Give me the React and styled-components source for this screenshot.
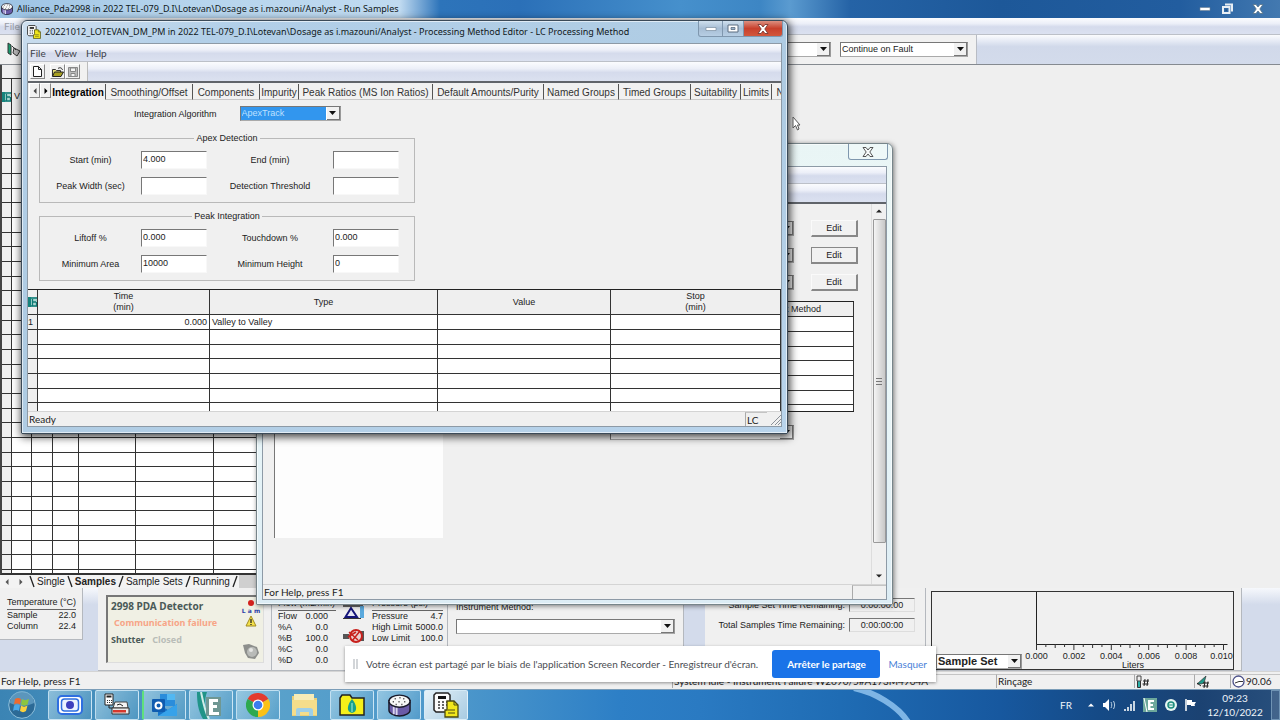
import React from "react";
import styled, { createGlobalStyle, css } from "styled-components";

const ui = `Lato, "Open Sans", sans-serif`;
const titleFont = `"Noto Sans", "Open Sans", sans-serif`;
const ms = `"Liberation Sans", Arial, sans-serif`;

const Global = createGlobalStyle`
  *, *::before, *::after { box-sizing: border-box; }
  body { margin: 0; font-family: ${ms}; font-size: 9px; line-height: 12px; color: #222; }
  button, input, select { font: inherit; color: inherit; margin: 0; padding: 0; border-radius: 0; }
  fieldset { margin: 0; min-width: 0; }
`;

const barFill = css`background: linear-gradient(#fbfcfe 0%, #eceff8 35%, #d5dbec 55%, #dbe1f0 100%);`;

const Screen = styled.div`
  position: relative;
  display: flex;
  flex-direction: column;
  height: 100vh;
  overflow: hidden;
  background: #efefef;
`;

/* ---------- main window ---------- */

const MainTitle = styled.header`
  display: flex;
  align-items: center;
  height: 18px;
  flex: none;
  padding: 0 4px 0 1px;
  gap: 4px;
  font-family: ${titleFont};
  font-size: 9px;
  color: #101820;
  background: linear-gradient(90deg, #9cc3e4 0, #b4d3ec 160px, #c0daf0 400px, #2d74ba 440px, #2b70b8 520px,
    #4690cc 680px, #3d86c4 760px, #5b9bd0 790px, #2563a6 850px, #1d5899 1000px, #225d9f 1180px, #4379b0 100%);
  svg { flex: none; }
`;

const Spacer = styled.span`flex: 1;`;

const GlassButton = styled.button`
  display: grid;
  place-items: center;
  width: ${(p) => p.$w}px;
  height: 16px;
  border: 0;
  background: transparent;
`;

const MenuStrip = styled.nav`
  display: flex;
  align-items: center;
  height: ${(p) => p.$h || 17}px;
  flex: none;
  gap: 9px;
  padding-left: ${(p) => p.$pad || 4}px;
  border-bottom: 1px solid #bcc0c8;
  ${barFill}
`;

const MenuItem = styled.button`
  border: 0;
  background: none;
  font-family: ${ui};
  font-size: 10px;
  line-height: 14px;
  color: ${(p) => (p.$dim ? "#9a9ea8" : "#3c4048")};
`;

const MainToolbar = styled.div`
  display: flex;
  height: 30px;
  flex: none;
  border-bottom: 1px solid #858a90;
  background: linear-gradient(#fbfcfe 0%, #e4e9f4 22%, #d1d9ea 40%, #d3dbeb 100%);
`;

const ToolGroup = styled.div`
  display: flex;
  align-items: center;
  gap: 9px;
  width: 977px;
  padding: 0 8px 0 6px;
  background: #f1f1f1;
  border-right: 1px solid #b8bcc4;
`;

const ComboWrap = styled.span`
  position: relative;
  display: block;
  flex: none;
  width: ${(p) => p.$w}px;
  height: 15px;
  border: 1px solid #777;
  border-right-color: #999;
  border-bottom-color: #aaa;
  background: #fff;
  select {
    display: block;
    width: 100%;
    height: 13px;
    padding: 0 15px 0 1px;
    border: 0;
    appearance: none;
    background: transparent;
    line-height: 13px;
    ${(p) => p.$bold && css`font-weight: bold; font-size: 11px;`}
  }
  ${(p) => p.$active && css`select { background: linear-gradient(90deg, #3296ee calc(100% - 14px), #fff 0); color: #bfe0ff; }`}
`;

const ComboArrow = styled.span`
  position: absolute;
  top: 0;
  right: 0;
  width: 13px;
  height: 13px;
  display: grid;
  place-items: center;
  pointer-events: none;
  background: #f1f1f1;
  border-right: 1px solid #777;
  border-bottom: 1px solid #777;
`;

const Combo = ({ w, value, label, active, bold }) => (
  <ComboWrap $w={w} $active={active} $bold={bold}>
    <select aria-label={label} defaultValue={value}>
      <option>{value}</option>
    </select>
    <ComboArrow>
      <svg width="7" height="4" aria-hidden="true"><path d="M0 0h7L3.500 4z" fill="#111" /></svg>
    </ComboArrow>
  </ComboWrap>
);

const Workspace = styled.main`
  display: flex;
  flex: 1;
  min-height: 0;
`;

const SheetColumn = styled.section`
  display: flex;
  flex-direction: column;
  width: 300px;
  min-height: 0;
`;

const SheetClip = styled.div`
  flex: 1;
  min-height: 0;
  overflow: hidden;
  border-left: 2px solid #444;
  border-bottom: 2px solid #333;
  background: #fff;
`;

const Grid = styled.table`
  width: 100%;
  table-layout: fixed;
  border-collapse: separate;
  border-spacing: 0;
  background: #fff;
  th, td {
    height: 15px;
    padding: 0 2px;
    border-right: 1px solid #333;
    border-bottom: 1px solid #333;
    font-weight: normal;
    text-align: left;
    line-height: 11px;
    white-space: nowrap;
    overflow: hidden;
  }
  tbody tr:nth-child(3n) > * { height: 14px; }
  thead th { background: #efefef; text-align: ${(p) => (p.$leftHead ? "left" : "center")}; }
  tbody th { background: #efefef; padding: 0 0 0 2px; }
  td.num { text-align: right; }
  th svg { display: block; }
  th:first-child { padding-left: 0; padding-right: 0; }
`;

const SheetTop = styled.div`
  height: 14px;
  background: #efefef;
  border-bottom: 1px solid #333;
`;

const SheetTabs = styled.div`
  display: flex;
  align-items: center;
  height: 13px;
  flex: none;
  background: #cfcfcf;
  svg { display: block; flex: none; background: #f3f3f3; }
`;

const SheetTab = styled.button`
  height: 13px;
  border: 0;
  padding: 0 ${(p) => (p.$nav ? 4 : 1)}px;
  background: #f3f3f3;
  font-size: 10px;
  font-weight: ${(p) => (p.$on ? "bold" : "normal")};
`;

/* ---------- instrument panels ---------- */

const PanelStrip = styled.section`
  display: flex;
  align-items: stretch;
  height: 83px;
  flex: none;
  background: linear-gradient(#f6f8fc, #d3dbeb 20%, #d3dbeb);
`;

const Panel = styled.div`
  display: flex;
  flex: none;
  align-self: ${(p) => (p.$short ? "flex-start" : "stretch")};
  width: ${(p) => p.$w}px;
  gap: ${(p) => p.$gap || 0}px;
  margin-right: ${(p) => p.$after || 0}px;
  padding: ${(p) => p.$p || "0"};
  background: #f0f0f0;
  border-right: 1px solid #b4b8be;
  border-bottom: 1px solid #b4b8be;
`;

const Readings = styled.table`
  align-self: flex-start;
  width: ${(p) => p.$w}px;
  border-spacing: 0;
  line-height: 11px;
  white-space: nowrap;
  caption { text-align: left; border-bottom: 1px solid #666; height: 13px; }
  th { padding: 0; font-weight: normal; text-align: left; }
  td { padding: 0 ${(p) => p.$inset || 0}px 0 0; text-align: right; }
`;

const Data = ({ w, title, rows, inset }) => (
  <Readings $w={w} $inset={inset}>
    <caption>{title}</caption>
    <tbody>
      {rows.map(([k, v]) => (
        <tr key={k}><th scope="row">{k}</th><td>{v}</td></tr>
      ))}
    </tbody>
  </Readings>
);

const Detector = styled.div`
  flex: 1;
  display: flex;
  justify-content: space-between;
  padding: 3px 2px 2px 3px;
  background: #f0f0e4;
  border: 1px solid #ddd;
  border-top: 2px solid #777;
  border-left: 2px solid #777;
  font-family: "Noto Sans", sans-serif;
  font-weight: bold;
`;

const DetectorText = styled.div`
  display: flex;
  flex-direction: column;
  gap: 5px;
  white-space: nowrap;
`;

const DetectorLine = styled.span`
  font-size: ${(p) => p.$s || 9}px;
  padding-left: ${(p) => p.$in || 0}px;
  color: ${(p) => p.$c || "#4a5a58"};
  em { font-style: normal; color: #b9bdb8; padding-left: 5px; }
`;

const DetectorIcons = styled.div`
  display: flex;
  flex-direction: column;
  align-items: center;
  width: 20px;
  color: #2c3fa8;
  font-size: 6px;
  line-height: 9px;
  font-family: "DejaVu Sans", sans-serif;
  svg:last-child { margin-top: auto; }
`;

const IconColumn = styled.div`
  display: flex;
  flex-direction: column;
  gap: 8px;
  width: 22px;
`;

const FieldColumn = styled.div`
  display: flex;
  flex-direction: column;
  gap: 6px;
  flex: 1;
`;

const TimeRow = styled.div`
  display: flex;
  align-items: center;
  justify-content: flex-end;
  gap: 4px;
  white-space: nowrap;
`;

const TimeBox = styled.output`
  width: 66px;
  height: 14px;
  text-align: center;
  border: 1px solid #ddd;
  border-top-color: #777;
  border-left-color: #777;
`;

const PlotBox = styled.div`
  display: flex;
  flex: 1;
  min-width: 0;
  align-items: flex-end;
  border: 1px solid #333;
  padding-left: 4px;
  > svg { display: block; flex: none; overflow: visible; }
  svg text { font-family: ${ms}; font-size: 9px; fill: #222; }
`;

const StatusBar = styled.footer`
  display: flex;
  align-items: center;
  height: ${(p) => p.$h || 18}px;
  flex: none;
  font-family: ${ui};
  font-size: 10px;
  background: #f0f0f0;
  border-top: 1px solid #d4d4d4;
  white-space: nowrap;
`;

const Pane = styled.span`
  display: flex;
  align-items: center;
  gap: 1px;
  height: 14px;
  padding-left: 1px;
  overflow: hidden;
  flex: ${(p) => (p.$w ? `0 0 ${p.$w}px` : "1")};
  border-left: ${(p) => (p.$line ? "1px solid #aaa" : "0")};
  border-top: ${(p) => (p.$line ? "1px solid #c4c4c4" : "0")};
`;

/* ---------- floating windows ---------- */

const Window = styled.section`
  position: absolute;
  left: ${(p) => p.$x}px;
  top: ${(p) => p.$y}px;
  width: ${(p) => p.$w}px;
  display: flex;
  flex-direction: column;
  padding: 0 5px ${(p) => (p.$front ? 6 : 4)}px;
  border: 1px solid ${(p) => (p.$front ? "#3b4a58" : "#77858a")};
  border-radius: 6px 6px 1px 1px;
  background: ${(p) => (p.$front
    ? "linear-gradient(160deg, #cfe0f0 0, #b2cfe8 12%, #aecbe2 50%, #b9d4ec 100%)"
    : "linear-gradient(#e9f5f5, #eefafa 40%, #dcecf4)")};
  box-shadow: inset 0 0 0 1px rgba(255, 255, 255, 0.6), ${(p) => (p.$front
    ? "1px 2px 8px 1px rgba(0, 0, 0, 0.75)" : "1px 1px 5px rgba(0, 0, 0, 0.5)")};
`;

const WindowTitle = styled.header`
  display: flex;
  align-items: center;
  gap: 4px;
  height: 22px;
  font-family: ${titleFont};
  font-size: 9px;
  color: #101820;
  white-space: nowrap;
  margin-right: -1px;
  svg { flex: none; }
`;

const Caption = styled.button`
  display: grid;
  place-items: center;
  align-self: flex-start;
  width: ${(p) => p.$w}px;
  height: 16px;
  border: 1px solid #7f97ae;
  border-top: 0;
  margin-left: ${(p) => (p.$join ? -5 : 0)}px;
  border-radius: ${(p) => p.$r || "0"};
  background: ${(p) => p.$bg || "linear-gradient(#cfdfee, #a6bdd4 50%, #b7cee4)"};
`;

const Client = styled.div`
  display: flex;
  flex-direction: column;
  background: #f0f0f0;
  border: 1px solid #8d9aa6;
`;

const ToolStrip = styled.div`
  display: flex;
  align-items: center;
  height: ${(p) => p.$h || 21}px;
  flex: none;
  border-bottom: 2px solid #60646a;
  ${barFill}
`;

const ToolButtons = styled.div`
  display: flex;
  align-items: center;
  height: 19px;
  padding-left: 2px;
  width: 60px;
  background: #f1f1f1;
  border-right: 1px solid #bbb;
`;

const ToolButton = styled.button`
  display: grid;
  place-items: center;
  width: 15px;
  height: 15px;
  margin-right: ${(p) => p.$after || 0}px;
  background: #f1f1f1;
  border: 1px solid #fff;
  border-right-color: #888;
  border-bottom-color: #888;
`;

const TabRow = styled.div`
  display: flex;
  height: 17px;
  overflow: hidden;
  padding-left: 1px;
`;

const NavButton = styled.button`
  display: grid;
  place-items: center;
  width: 11px;
  height: 15px;
  flex: none;
  background: #f1f1f1;
  border: 1px solid #fff;
  border-right-color: #888;
  border-bottom-color: #888;
`;

const Tab = styled.button`
  flex: none;
  width: ${(p) => p.$w}px;
  height: 16px;
  margin-top: 1px;
  padding-top: 2px;
  border: 0;
  border-right: 1px solid #555;
  border-bottom: 1px solid ${(p) => (p.$on ? "transparent" : "#c8c8c8")};
  background: #f1f1f1;
  font-size: 10px;
  font-weight: ${(p) => (p.$on ? "bold" : "normal")};
  color: ${(p) => (p.$on ? "#000" : "#333")};
  white-space: nowrap;
  overflow: hidden;
`;

const Form = styled.form`
  display: flex;
  flex-direction: column;
  align-items: flex-start;
  gap: 7px;
  padding: 6px 11px 8px;
`;

const AlgorithmRow = styled.div`
  display: flex;
  align-items: center;
  gap: 23px;
  padding: 0 0 4px 95px;
`;

const Group = styled.fieldset`
  width: 376px;
  border: 1px solid #b9b9b9;
  padding: 7px 0;
  legend { padding: 0 2px; margin: 0 auto; height: 12px; font-size: 9px; }
`;

const GroupGrid = styled.div`
  display: grid;
  grid-template-columns: 101px 66px 126px 66px;
  row-gap: 8px;
  align-items: center;
  label { text-align: center; }
`;

const Field = styled.input`
  width: 66px;
  height: 18px;
  padding: 0 0 3px 1px;
  background: #fff;
  border: 1px solid #f8f8f8;
  border-top-color: #777;
  border-left-color: #777;
`;

const GridClip = styled.div`
  height: ${(p) => p.$h}px;
  overflow: hidden;
  border-top: 1px solid #222;
  ${(p) => p.$boxed && css`border-left: 1px solid #222; border-bottom: 1px solid #222;`}
`;

const MethodBody = styled.div`
  display: flex;
  height: 380px;
`;

const MethodPane = styled.div`
  flex: 1;
  display: flex;
  justify-content: space-between;
  padding: 16px 13px 46px 11px;
`;

const MethodList = styled.div`
  width: 169px;
  background: #fdfdfd;
  border-left: 1px solid #777;
`;

const MethodFields = styled.div`
  display: flex;
  flex-direction: column;
  width: 248px;
`;

const MethodRow = styled.div`
  display: flex;
  justify-content: space-between;
  height: 17px;
  margin-bottom: 10px;
  align-items: center;
`;

const MethodGrid = styled.div`
  width: 244px;
  margin-bottom: 13px;
`;

const HeadShift = styled.div`
  padding-right: 32px;
  text-align: right;
`;

const PushButton = styled.button`
  width: 47px;
  height: 17px;
  background: #f1f1f1;
  border: 1px solid ${(p) => (p.$focus ? "#888" : "#fafafa")};
  border-right: 2px solid #888;
  border-bottom: 2px solid #888;
`;

const Scroll = styled.div`
  display: flex;
  flex-direction: column;
  align-items: center;
  width: 15px;
  padding: 4px 0 5px;
  gap: 5px;
  border-left: 1px solid #ddd;
`;

const Thumb = styled.div`
  display: grid;
  place-items: center;
  width: 13px;
  height: 324px;
  margin-bottom: auto;
  border: 1px solid #9a9a9a;
  border-radius: 1px;
  background: linear-gradient(90deg, #f4f4f4, #dedede 50%, #c8c8c8);
`;

/* ---------- screen sharing bar ---------- */

const ShareBar = styled.aside`
  position: absolute;
  left: 345px;
  bottom: 38px;
  display: flex;
  align-items: center;
  width: 591px;
  height: 36px;
  padding: 0 9px 0 8px;
  background: #fff;
  box-shadow: 0 1px 3px rgba(0, 0, 0, 0.4);
  font-family: ${ui};
  font-size: 10px;
  color: #4a4d52;
  white-space: nowrap;
  svg { margin-right: 8px; }
`;

const StopButton = styled.button`
  width: 108px;
  height: 28px;
  margin: 0 8px 0 auto;
  border: 0;
  border-radius: 3px;
  background: #1a73e8;
  color: #fff;
  font-weight: bold;
`;

const HideLink = styled.a`
  color: #4a7fd8;
  text-decoration: none;
`;

/* ---------- taskbar ---------- */

const Taskbar = styled.footer`
  position: relative;
  display: flex;
  align-items: center;
  height: 31px;
  flex: none;
  padding-left: 4px;
  background: linear-gradient(90deg, #3b84b4 0, #5aa2cb 260px, #4c97cb 460px, #2d7fc6 620px, #2a7ac2 700px,
    #1f6cb4 840px, #17589f 1000px, #154a86 1100px, #1b4272 1200px, #284f7c 100%);
  border-top: 1px solid #7b9db8;
`;

const Streak = styled.svg`
  position: absolute;
  left: 840px;
  top: 0;
`;

const Orb = styled.button`
  width: 36px;
  height: 30px;
  margin-right: 8px;
  border: 0;
  background: none;
  svg { display: block; margin: auto; }
`;

const Task = styled.button`
  display: grid;
  place-items: center;
  width: 44px;
  height: 30px;
  margin-right: 3px;
  border: 1px solid ${(p) => (p.$plain ? "transparent" : "rgba(225, 243, 252, 0.75)")};
  border-radius: 2px;
  background: ${(p) => (p.$on
    ? "linear-gradient(135deg, #e4f1f8, #a8cbe2)"
    : p.$plain ? "transparent" : "linear-gradient(120deg, rgba(190, 225, 240, 0.6), rgba(90, 160, 200, 0.25))")};
  ${(p) => p.$green && css`border-left: 2px solid #5fe07c;`}
`;

const Tray = styled.div`
  display: flex;
  align-items: center;
  gap: 8px;
  margin-left: auto;
  color: #eef4fa;
  font-family: ${ui};
  font-size: 10px;
  line-height: 14px;
  svg { display: block; }
`;

const Language = styled.span`
  margin-right: 8px;
`;

const Clock = styled.time`
  width: 60px;
  margin-right: -2px;
  text-align: center;
`;

const ShowDesktop = styled.button`
  width: 9px;
  height: 30px;
  border: 1px solid #6f93b4;
  background: rgba(255, 255, 255, 0.12);
`;

const Pointer = styled.svg`
  position: absolute;
  left: 791px;
  top: 116px;
`;

/* ---------- icons ---------- */

const EmpowerIcon = () => (
  <svg width="9" height="10" aria-hidden="true">
    <path d="M0 0h9v10H0z" fill="#a9d6d0" />
    <path d="M0 0h3v10H0z" fill="#15837c" />
    <path d="M3 1h6M4 5h4M3 9h6M4.500 2v7M8.500 5v4" stroke="#0e7a74" strokeWidth="1.300" fill="none" />
  </svg>
);

const CalcIcon = ({ size = 14 }) => (
  <svg width={size} height={size} viewBox="0 0 26 26" aria-hidden="true">
    <path d="M3 1h12l2 2v15l-2 2H3l-2-2V3z" fill="#fafafa" stroke="#222" strokeWidth="1.500" />
    <path d="M5 4h8v3H5z" fill="#111" />
    <path d="M5 10h2m2 0h2m2 0h2M5 13h2m2 0h2m2 0h2M5 16h2m2 0h2" stroke="#333" strokeWidth="1.500" />
    <path d="M14 9h7l4 4v12H12V18h2z" fill="#f1e71c" stroke="#4c4a10" strokeWidth="1.300" />
    <path d="M21 9v4h4M15 18h7M15 21h7" stroke="#4c4a10" fill="none" />
  </svg>
);

const DrumIcon = ({ size = 12 }) => (
  <svg width={size} height={size} viewBox="0 0 24 24" aria-hidden="true">
    <path d="M1 7v10c0 3 5 6 11 6s11-3 11-6V7z" fill="#6a5ba8" stroke="#1a1a2a" strokeWidth="1.500" />
    <path d="M6 12v9M9 13v9" stroke="#d8d4ee" strokeWidth="2" />
    <ellipse cx="12" cy="7.500" rx="11" ry="6.300" fill="#f7f7f7" stroke="#1a1a2a" strokeWidth="1.500" />
    <path d="M7 5h1m4-1h1m3 1h1M5 8h1m5 0h1m5 0h1M8 11h1m5 0h1" stroke="#222" strokeWidth="1.600" />
  </svg>
);

const Cross = ({ fill, edge }) => (
  <svg width="12" height="10" viewBox="0 0 12 10" aria-hidden="true">
    <path d="M1 .5h3L6 3 8 .5h3L7.800 5 11 9.500H8L6 7 4 9.500H1L4.200 5z" fill={fill} stroke={edge} strokeWidth="0.900" />
  </svg>
);

const MinIcon = () => (
  <svg width="12" height="4" aria-hidden="true"><path d="M1 .5h10v3H1z" fill="#fff" stroke="#6b7f94" strokeWidth=".6" /></svg>
);

const MaxIcon = () => (
  <svg width="12" height="9" aria-hidden="true">
    <path d="M1 1h10v7H1z" fill="#fff" stroke="#5b6c80" />
    <path d="M4 3.500h4v2H4z" fill="#9db4cb" stroke="#5b6c80" strokeWidth=".8" />
  </svg>
);

const RestoreIcon = () => (
  <svg width="12" height="12" aria-hidden="true">
    <path d="M4 1.500h7v7M2 4h6.500v6H2z" fill="none" stroke="#e8eef4" strokeWidth="2" />
    <path d="M4.500 6.500h1.500v1.500H4.500z" fill="#24507f" />
  </svg>
);

const Tri = ({ dir, fill = "#222" }) => (
  <svg width="6" height="6" viewBox="0 0 6 6" aria-hidden="true">
    <path d={{ l: "M4.500 0v6L1.500 3z", r: "M1.500 0v6L4.500 3z", u: "M0 4.500h6L3 1.500z", d: "M0 1.500h6L3 4.500z" }[dir]} fill={fill} />
  </svg>
);

const Slash = ({ back }) => (
  <svg width="8" height="13" aria-hidden="true">
    <path d={back ? "M2 1l4 11" : "M6 1L2 12"} stroke="#222" strokeWidth="1.300" />
  </svg>
);

const ValveIcon = () => (
  <svg width="22" height="22" aria-hidden="true">
    <path d="M0 4l6-3h10l4 4v4H0z" fill="#666" />
    <path d="M17 8h4v12h-4z" fill="#5aa9dd" />
    <path d="M2.500 19L8 10l6 9z" fill="#e6e6f4" stroke="#15157a" strokeWidth="2" />
    <path d="M0 20.500h18" stroke="#333" />
  </svg>
);

const StopFlowIcon = () => (
  <svg width="22" height="16" aria-hidden="true">
    <path d="M0 6h6v5H0zM17 3h4v10h-4z" fill="#555" />
    <circle cx="13" cy="8" r="6" fill="#e9d0d0" stroke="#c8201c" strokeWidth="2" />
    <path d="M6 4l9 8M5 9l8-5M17 3L9 13" stroke="#c8201c" strokeWidth="1.500" />
  </svg>
);

const leftCols = [10, 20, 21, 26, 57, 78, 88];

const range = (n) => Array.from({ length: n }, (_, i) => i);

const TABS = [
  ["Integration", 55], ["Smoothing/Offset", 87], ["Components", 67], ["Impurity", 39],
  ["Peak Ratios (MS Ion Ratios)", 134], ["Default Amounts/Purity", 111], ["Named Groups", 75],
  ["Timed Groups", 72], ["Suitability", 50], ["Limits", 31], ["Noise and Drift", 76],
];

const GROUPS = [
  ["Apex Detection", [["Start (min)", "4.000"], ["End (min)", ""], ["Peak Width (sec)", ""], ["Detection Threshold", ""]]],
  ["Peak Integration", [["Liftoff %", "0.000"], ["Touchdown %", "0.000"], ["Minimum Area", "10000"], ["Minimum Height", "0"]]],
];

function RunSheet() {
  return (
    <SheetColumn>
      <SheetClip>
        <SheetTop />
        <Grid $leftHead>
          <colgroup>{leftCols.map((w, i) => <col key={i} style={{ width: w }} />)}</colgroup>
          <thead>
            <tr style={{ height: 36 }}>
              <th><EmpowerIcon /></th><th>V</th><th /><th /><th /><th /><th />
            </tr>
          </thead>
          <tbody>
            {range(34).map((r) => (
              <tr key={r}><th />{range(6).map((c) => <td key={c} />)}</tr>
            ))}
          </tbody>
        </Grid>
      </SheetClip>
      <SheetTabs>
        <SheetTab $nav aria-label="Previous sheet"><Tri dir="l" fill="#555" /></SheetTab>
        <SheetTab $nav aria-label="Next sheet"><Tri dir="r" fill="#555" /></SheetTab>
        <Slash back />
        <SheetTab>Single</SheetTab><Slash back />
        <SheetTab $on>Samples</SheetTab><Slash />
        <SheetTab>Sample Sets</SheetTab><Slash />
        <SheetTab>Running</SheetTab><Slash />
      </SheetTabs>
    </SheetColumn>
  );
}

function Plot() {
  const step = 37.4;
  return (
    <PlotBox>
      <Combo w={86} value="Sample Set" label="Plot scope" bold />
      <svg width="212" height="80" aria-label="Flow plot">
        <path d="M14.500 3v58M14.500 55.500h191" stroke="#222" fill="none" />
        {range(21).map((i) => (
          <path key={i} d={`M${14.500 + (i * step) / 4} 55v${i % 4 === 0 ? 6 : i % 2 === 0 ? 4 : 3}`} stroke="#333" />
        ))}
        {range(6).map((i) => (
          <text key={i} x={14.500 + i * step - (i === 5 ? 2 : 0)} y="70" textAnchor="middle">{`0.0${i === 5 ? "10" : `0${i * 2}`}`}</text>
        ))}
        <text x="111" y="79" textAnchor="middle">Liters</text>
      </svg>
    </PlotBox>
  );
}

function Instruments() {
  return (
    <PanelStrip>
      <Panel $short $w={83} $p="9px 6px 7px 7px" $after={15}>
        <Data w={69} title="Temperature (°C)" rows={[["Sample", "22.0"], ["Column", "22.4"]]} />
      </Panel>
      <Panel $w={174} $p="7px 7px 7px 8px">
        <Detector>
          <DetectorText>
            <DetectorLine $s={10}>2998 PDA Detector</DetectorLine>
            <DetectorLine $in={3} $c="#f7a587">Communication failure</DetectorLine>
            <DetectorLine>Shutter <em>Closed</em></DetectorLine>
          </DetectorText>
          <DetectorIcons>
            <svg width="8" height="6" aria-hidden="true"><circle cx="4" cy="3" r="3" fill="#d3201c" /></svg>
            L a m
            <svg width="12" height="12" aria-hidden="true">
              <path d="M6 1l5 10H1z" fill="#f3e04a" stroke="#a08a20" /><path d="M6 4v4M6 9v1" stroke="#222" strokeWidth="1.300" />
            </svg>
            <svg width="18" height="17" aria-hidden="true">
              <path d="M1 2l6-1 8 3 2 6-4 6-7-1-3-5z" fill="#8d8f8c" /><circle cx="10" cy="9" r="5" fill="#b9bbb8" /><circle cx="9" cy="7" r="2" fill="#e6e6e4" />
            </svg>
          </DetectorIcons>
        </Detector>
      </Panel>
      <Panel $w={176} $p="10px 4px 0 6px" $gap={7}>
        <Data w={58} inset={8} title="Flow (mL/min)" rows={[["Flow", "0.000"], ["%A", "0.0"], ["%B", "100.0"], ["%C", "0.0"], ["%D", "0.0"]]} />
        <IconColumn><ValveIcon /><StopFlowIcon /></IconColumn>
        <Data w={71} title="Pressure (psi)" rows={[["Pressure", "4.7"], ["High Limit", "5000.0"], ["Low Limit", "100.0"]]} />
      </Panel>
      <Panel $w={236} $p="13px 8px 0 8px" $after={21}>
        <FieldColumn>
          <span>Instrument Method:</span>
          <Combo w={219} value="" label="Instrument Method" />
        </FieldColumn>
      </Panel>
      <Panel $w={221} $p="10px 10px 0 0">
        <FieldColumn>
          {["Sample Set Time Remaining:", "Total Samples Time Remaining:"].map((t) => (
            <TimeRow key={t}>{t}<TimeBox>0:00:00:00</TimeBox></TimeRow>
          ))}
        </FieldColumn>
      </Panel>
      <Panel $w={316} $p="3px 7px 0 5px"><Plot /></Panel>
    </PanelStrip>
  );
}

function MethodWindow() {
  return (
    <Window $x={256} $y={143} $w={637} aria-label="Method">
      <WindowTitle>
        <Spacer />
        <Caption $w={40} aria-label="Close" $r="0 0 3px 3px" $bg="#eef8f8"><Cross fill="#f6fafa" edge="#444" /></Caption>
      </WindowTitle>
      <Client>
        <MenuStrip />
        <ToolStrip $h={20} />
        <MethodBody>
          <MethodPane>
            <MethodList />
            <MethodFields>
              {range(3).map((i) => (
                <MethodRow key={i}>
                  <Combo w={184} value="" label={`Method ${i + 1}`} />
                  <PushButton $focus={i === 1}>Edit</PushButton>
                </MethodRow>
              ))}
              <MethodGrid>
                <GridClip $h={111} $boxed>
                  <Grid>
                    <thead><tr><th scope="col"><HeadShift>Export Method</HeadShift></th></tr></thead>
                    <tbody>{range(7).map((r) => <tr key={r}><td /></tr>)}</tbody>
                  </Grid>
                </GridClip>
              </MethodGrid>
              <Combo w={184} value="" label="Output" />
            </MethodFields>
          </MethodPane>
          <Scroll>
            <Tri dir="u" />
            <Thumb>
              <svg width="6" height="8" aria-hidden="true"><path d="M0 1.500h6M0 4.500h6M0 7.500h6" stroke="#777" /></svg>
            </Thumb>
            <Tri dir="d" />
          </Scroll>
        </MethodBody>
        <StatusBar $h={15}><Pane>For Help, press F1</Pane><Pane $w={34} $line /></StatusBar>
      </Client>
    </Window>
  );
}

function EditorWindow() {
  return (
    <Window $x={21} $y={20} $w={767} $front aria-label="Processing Method Editor">
      <WindowTitle>
        <CalcIcon />
        20221012_LOTEVAN_DM_PM in 2022 TEL-079_D.I\Lotevan\Dosage as i.mazouni/Analyst - Processing Method Editor - LC Processing Method
        <Spacer />
        <Caption $w={25} $r="0 0 0 3px" aria-label="Minimize"><MinIcon /></Caption>
        <Caption $w={22} $join aria-label="Maximize"><MaxIcon /></Caption>
        <Caption $w={40} $join $r="0 0 3px 0" aria-label="Close" $bg="linear-gradient(#dd8f80, #c8402c 50%, #d2573c)">
          <Cross fill="#fff" edge="#7a3a34" />
        </Caption>
      </WindowTitle>
      <Client>
        <MenuStrip $h={18} $pad={2}>
          {["File", "View", "Help"].map((m) => <MenuItem key={m}>{m}</MenuItem>)}
        </MenuStrip>
        <ToolStrip>
          <ToolButtons>
            <ToolButton $after={5} aria-label="New">
              <svg width="9" height="11" aria-hidden="true"><path d="M.5.500h5l3 3v7h-8zM5.500.500v3h3" fill="#fff" stroke="#222" /></svg>
            </ToolButton>
            <ToolButton aria-label="Open">
              <svg width="12" height="10" aria-hidden="true">
                <path d="M.5 9V2.500h3l1 1h4V5" fill="#e8e07a" stroke="#333" /><path d="M.5 9.500l2-4.500h9l-2.500 4.500z" fill="#a8a020" stroke="#222" /><path d="M6 1.500c2-1.500 4-.5 4.500 1.500" stroke="#222" fill="none" />
              </svg>
            </ToolButton>
            <ToolButton aria-label="Save">
              <svg width="10" height="10" aria-hidden="true"><path d="M.5.500h9v9h-9z" fill="#bbb" stroke="#888" /><path d="M2.500 1h5v3.500h-5zM3 6.500h4v3H3z" fill="#f4f4f4" stroke="#888" /></svg>
            </ToolButton>
          </ToolButtons>
        </ToolStrip>
        <TabRow role="tablist">
          <NavButton aria-label="Scroll left"><Tri dir="l" fill="#444" /></NavButton>
          <NavButton aria-label="Scroll right"><Tri dir="r" fill="#000" /></NavButton>
          {TABS.map(([t, w], i) => <Tab key={t} role="tab" $w={w} $on={i === 0}>{t}</Tab>)}
        </TabRow>
        <Form>
          <AlgorithmRow>
            <span>Integration Algorithm</span>
            <Combo w={101} value="ApexTrack" label="Integration Algorithm" active />
          </AlgorithmRow>
          {GROUPS.map(([title, fields]) => (
            <Group key={title}>
              <legend>{title}</legend>
              <GroupGrid>
                {fields.map(([name, value]) => (
                  <React.Fragment key={name}>
                    <label htmlFor={name}>{name}</label>
                    <Field id={name} defaultValue={value} />
                  </React.Fragment>
                ))}
              </GroupGrid>
            </Group>
          ))}
        </Form>
        <GridClip $h={122}>
          <Grid>
            <colgroup>{[10, 172, 228, 173, 170].map((w, i) => <col key={i} style={{ width: w }} />)}</colgroup>
            <thead>
              <tr style={{ height: 25 }}>
                <th><EmpowerIcon /></th><th>Time<br />(min)</th><th>Type</th><th>Value</th><th>Stop<br />(min)</th>
              </tr>
            </thead>
            <tbody>
              {range(7).map((r) => (
                <tr key={r}>
                  <th scope="row">{r === 0 ? "1" : ""}</th>
                  <td className="num">{r === 0 ? "0.000" : ""}</td>
                  <td>{r === 0 ? "Valley to Valley" : ""}</td>
                  <td /><td />
                </tr>
              ))}
            </tbody>
          </Grid>
        </GridClip>
        <StatusBar $h={15}>
          <Pane>Ready</Pane>
          <Pane $w={22} $line>LC</Pane>
          <svg width="14" height="12" aria-hidden="true"><path d="M4 12L14 2M8 12l6-6M11 12l3-3" stroke="#8a9098" /></svg>
        </StatusBar>
      </Client>
    </Window>
  );
}

const TASKS = [
  ["Screen Recorder", {}, <svg key="i" width="26" height="20"><rect x="1" y="1" width="24" height="18" rx="4" fill="#fff" stroke="#2f6fe0" strokeWidth="2" /><rect x="4.500" y="4" width="17" height="12" rx="3" fill="#eaf2ff" stroke="#2f6fe0" strokeWidth="1.500" /><circle cx="13" cy="10" r="4" fill="#3d3fbe" /></svg>],
  ["Instrument", {}, <svg key="i" width="26" height="24"><path d="M1 1h8v11H1z" fill="#fff" stroke="#222" /><path d="M2.500 2.500h5v2h-5z" fill="#222" /><path d="M3 7.500h5M3 9.500h5" stroke="#333" strokeDasharray="1 1" /><path d="M5 12v3h5" stroke="#222" fill="none" /><path d="M11 9h12l1 6H9z" fill="#f4f4f4" stroke="#444" /><path d="M8 15h17v6H8z" fill="#e8e8e8" stroke="#333" /><path d="M9 17h13v2.500H9z" fill="#d6382c" /><path d="M13 12l3-1 3 2" stroke="#222" fill="none" /></svg>],
  ["Outlook", { $green: true }, <svg key="i" width="26" height="24"><path d="M8 1h15v12H8z" fill="#2a8ddb" /><path d="M15 1h8v6h-8z" fill="#52b8f2" /><path d="M6 11l10 6 9-6v12H6z" fill="#1673c8" /><path d="M6 23l19-12v12z" fill="#36a2ea" /><rect x="0" y="6" width="13" height="13" rx="1" fill="#0f5cb0" /><circle cx="6.500" cy="12.500" r="3" fill="none" stroke="#fff" strokeWidth="2" /></svg>],
  ["Empower", {}, <svg key="i" width="28" height="27"><path d="M0 0h10c-3 8-2 18 1 27H6C1 18 0 10 0 0z" fill="#209488" /><path d="M4 0c2 10 4 20 8 27" stroke="#d0ece8" strokeWidth="2" fill="none" /><path d="M9 5h15v19H9z" fill="#6f9793" /><path d="M12 7h9v3h-5v3h4v3h-4v4h6v3H12z" fill="#fff" /></svg>],
  ["Chrome", {}, <svg key="i" width="24" height="24" viewBox="0 0 24 24"><path d="M12 12L1.600 6A12 12 0 0 1 22.400 6z" fill="#e33b2e" /><path d="M12 12L22.400 6A12 12 0 0 1 12 24z" fill="#fbc116" /><path d="M12 12v12A12 12 0 0 1 1.600 6z" fill="#2da94f" /><circle cx="12" cy="12" r="5.500" fill="#fff" /><circle cx="12" cy="12" r="4.300" fill="#3b7ded" /></svg>],
  ["Explorer", { $plain: true }, <svg key="i" width="28" height="24"><path d="M1 3h9l2 2h14v18H1z" fill="#e9cf78" /><path d="M3 1h20v6H3z" fill="#f6ecb8" /><path d="M1 7h25v15H1z" fill="#f5dd8b" /><path d="M5 23v-6c0-2 2-2 3-2h11c2 0 3 1 3 2v6h-4v-4h-9v4z" fill="#9fcfe8" /></svg>],
  ["Projects", {}, <svg key="i" width="26" height="22"><path d="M1 4l2-3h8l2 3h12v17H1z" fill="#f6f01a" stroke="#222" strokeWidth="1.500" /><path d="M13 5c5 6 6 13 0 14-6-1-5-8 0-14z" fill="#18a08c" /><path d="M13 9v9" stroke="#a6f0e4" /></svg>],
  ["Run Samples", {}, <DrumIcon key="i" size={23} />],
  ["Processing Method", { $on: true }, <CalcIcon key="i" size={26} />],
];

export default function App() {
  return (
    <>
      <Global />
      <Screen>
        <MainTitle>
          <DrumIcon />
          Alliance_Pda2998 in 2022 TEL-079_D.I\Lotevan\Dosage as i.mazouni/Analyst - Run Samples
          <Spacer />
          <GlassButton $w={18} aria-label="Minimize"><MinIcon /></GlassButton>
          <GlassButton $w={18} aria-label="Restore"><RestoreIcon /></GlassButton>
          <GlassButton $w={36} aria-label="Close"><Cross fill="#fff" edge="#5a7890" /></GlassButton>
        </MainTitle>
        <MenuStrip><MenuItem $dim>File</MenuItem></MenuStrip>
        <MainToolbar>
          <ToolGroup>
            <svg width="16" height="16" aria-hidden="true"><path d="M2 1l3 2v10l-3-2z" fill="#1b9a6e" stroke="#333" /><path d="M6 4l4 4M8 6l6 3-3 5-4-3z" fill="#bbb" stroke="#333" /></svg>
            <Spacer />
            <Combo w={100} value="" label="Run mode" />
            <Combo w={128} value="Continue on Fault" label="Fault handling" />
          </ToolGroup>
        </MainToolbar>
        <Workspace><RunSheet /></Workspace>
        <Instruments />
        <StatusBar>
          <Pane $w={672}>For Help, press F1</Pane>
          <Pane $line>System Idle - Instrument Failure W2690/5#A173M4904A</Pane>
          <Pane $w={138} $line>Rinçage</Pane>
          <Pane $w={60} $line>
            <svg width="14" height="13" aria-hidden="true"><path d="M1.500 2.500h3v10h-3z" fill="#2ab0a8" stroke="#333" /><path d="M1 1h4v5H1z" fill="#eee" stroke="#444" /><path d="M7 6h6M6.500 9h6M9 4L8 11M12 4l-1 7" stroke="#222" /></svg>
          </Pane>
          <Pane $w={36} $line>
            <svg width="14" height="13" aria-hidden="true"><path d="M1 9l9-8-2 7-3 1z" fill="#1e9a8a" stroke="#333" strokeWidth=".7" /><path d="M1 8l4 3M7 8h6M6.500 11h6M9 6.500L8 13M12 6.500L11 13" stroke="#222" /></svg>
          </Pane>
          <Pane $w={50} $line>
            <svg width="13" height="13" aria-hidden="true"><circle cx="6.500" cy="6.500" r="5.500" fill="#fff" stroke="#4a4f88" strokeWidth="1.300" /><path d="M3 8l4-1.500h4" stroke="#333" fill="none" /></svg>
            <span>90.06</span>
          </Pane>
        </StatusBar>
        <Taskbar>
          <Streak width="100" height="30" aria-hidden="true">
            <path d="M14 -2c20 4 44 18 54 34" stroke="#8fc3ee" strokeWidth="6" fill="none" opacity="0.850" />
          </Streak>
          <Orb aria-label="Start">
            <svg width="28" height="28" viewBox="0 0 28 28">
              <circle cx="14" cy="14" r="13.300" fill="#2c6a96" stroke="#8fc0dc" />
              <path d="M2 12a12 12 0 0 1 24 0c-8 4-16 4-24 0z" fill="#6fa9cc" opacity="0.700" />
              <path d="M7 8c2-1.500 4-1.500 6 0l-1 5.500c-2-1.500-4-1.500-6 0z" fill="#ee6a2e" />
              <path d="M14 8c2 1.500 4 1.500 7 0l-1.500 5.500c-2 1.500-4.500 1.500-6.500 0z" fill="#8cc63f" />
              <path d="M6 14.500c2-1.500 4-1.500 6 0l-1 5.500c-2-1.500-4-1.500-6 0z" fill="#4aa8e8" />
              <path d="M13 14.500c2 1.500 4 1.500 6.500 0L18 20c-2 1.500-4 1.500-6 0z" fill="#fbd13c" />
            </svg>
          </Orb>
          {TASKS.map(([name, props, icon]) => <Task key={name} aria-label={name} {...props}>{icon}</Task>)}
          <Tray>
            <Language>FR</Language>
            <Tri dir="u" fill="#fff" />
            <svg width="14" height="12" aria-hidden="true"><path d="M1 4h2l4-4v12L3 8H1z" fill="#fff" /><path d="M9 3c1 2 1 4 0 6M11.500 2c1.500 3 1.500 5 0 8" stroke="#b9cfe2" fill="none" /></svg>
            <svg width="11" height="11" aria-hidden="true"><path d="M0 9h2v2H0zM3 7h2v4H3zM6 4h2v7H6zM9 1h2v10H9z" fill="#c9d6e2" /></svg>
            <svg width="14" height="14" aria-hidden="true"><path d="M0 0h14v14H0z" fill="#6da89c" /><path d="M1 0l3 14" stroke="#fff" /><path d="M5 2h6v2H7.500v2H10v2H7.500v2H11v2H5z" fill="#fff" /></svg>
            <svg width="12" height="12" aria-hidden="true"><circle cx="6" cy="6" r="6" fill="#e6f6f2" /><circle cx="6" cy="6" r="3" fill="none" stroke="#1c8c7c" strokeWidth="1.500" /><path d="M4 6h5" stroke="#1c8c7c" /></svg>
            <svg width="12" height="12" aria-hidden="true"><path d="M1 0v12" stroke="#fff" strokeWidth="1.500" /><path d="M2 1h5v2h4l-1.500 2.500L10 7H6V6H2z" fill="#fff" /></svg>
            <Clock>09:23<br />12/10/2022</Clock>
            <ShowDesktop aria-label="Show desktop" />
          </Tray>
        </Taskbar>
        <MethodWindow />
        <EditorWindow />
        <ShareBar>
          <svg width="5" height="10" aria-hidden="true"><path d="M1 0v10M4 0v10" stroke="#c4c7cc" strokeWidth="1.500" /></svg>
          Votre écran est partagé par le biais de l'application Screen Recorder - Enregistreur d'écran.
          <StopButton>Arrêter le partage</StopButton>
          <HideLink href="#masquer">Masquer</HideLink>
        </ShareBar>
        <Pointer width="10" height="15" aria-hidden="true">
          <path d="M2 1v11l2.500-2.500L6.500 14l1.500-1L6.500 9H9z" fill="#fff" stroke="#555" />
        </Pointer>
      </Screen>
    </>
  );
}
